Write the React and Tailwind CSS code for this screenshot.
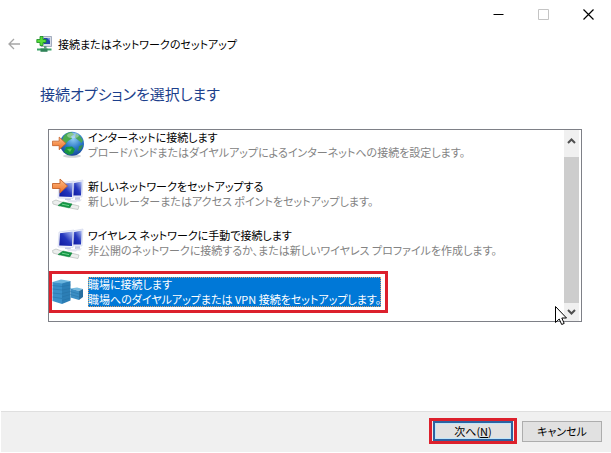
import React, { useState } from 'react';

const Arrow = () => (
    <path d="M0.5 8.5 H8 V4 L15.5 11 L8 18 V13.5 H0.5 Z" fill="url(#arrowFill)" stroke="#c4622a" strokeWidth="0.9" strokeLinejoin="round" />
);

const Monitors = () => (
    <>
        <path d="M20 4 L31 2 L30 19 L19 19 Z" fill="#eef0fa" stroke="#c3cae6" strokeWidth="0.5" />
        <path d="M21 5.2 L29.8 3.6 L29 17.6 L20.4 17.6 Z" fill="url(#screenFill)" />
        <path d="M7 5 L22 3 L21 20.5 L6 20 Z" fill="#f4f5fc" stroke="#c3cae6" strokeWidth="0.5" />
        <path d="M8 6.2 L20.8 4.4 L20 19 L7.2 18.6 Z" fill="url(#screenFill)" />
        <path d="M13 20.4 L19 20.6 L18.5 22.5 L13 22 Z M23 19.2 H28 V22 H23 Z" fill="#c3c9e4" />
        <path d="M15 22 L26 22.5 L24 24.5 L16 24 Z M24 21.5 H30 L28 23.5 H24 Z" fill="#e2e4f0" />
        <path d="M0.5 23.5 L4 22 L11 24.5 L8 28 L1 26 Z M19 26 L27 28 L26 31.5 L18 30 Z" fill="#eceeed" stroke="#b4bcb8" strokeWidth="0.7" />
        <path d="M6 27.5 L11 24 L20 26 L17.5 30 Z" fill="#159645" stroke="#0b8038" strokeWidth="0.5" />
        <path d="M10 26.2 L17 27.6" stroke="#6bd58d" />
    </>
);

const GlobeIcon = () => (
    <svg className="h-8 w-8 shrink-0" viewBox="0 0 32 32" aria-hidden="true">
        <ellipse cx="20" cy="27" rx="9" ry="1.8" fill="#cfd3d6" />
        <circle cx="20" cy="14.8" r="12" fill="url(#globeFill)" />
        <path d="M11 8.5 C13 4.5 17 3 20 3.4 L22 5.5 L19 7.5 L20 9.5 L16 12 L13 16 L9 15 Z" fill="#4cab4f" />
        <path d="M24 4.5 L28 7 L31 11.5 L29.5 14 L26 11 L23 8.5 Z" fill="#4ba65b" />
        <path d="M14 18 L20 17.5 L23 20 L21 24.5 L17 26 L12 23 Z" fill="#199541" />
        <path d="M15 20 L20 19.5 L18 23 Z" fill="#54c95a" />
        <path d="M27 17 L31 16 L29 20.5 L26 22 Z" fill="#358f55" />
        <ellipse cx="21" cy="6.5" rx="6" ry="2.8" fill="#fff" opacity="0.35" />
        <g transform="translate(0 4.5) scale(0.9)">
            <Arrow />
        </g>
    </svg>
);

const RouterIcon = () => (
    <svg className="h-8 w-8 shrink-0" viewBox="0 0 32 32" aria-hidden="true">
        <Monitors />
        <g transform="translate(0 -3)">
            <Arrow />
        </g>
    </svg>
);

const WirelessIcon = () => (
    <svg className="h-8 w-8 shrink-0" viewBox="0 0 32 32" aria-hidden="true">
        <Monitors />
    </svg>
);

const WorkplaceIcon = () => (
    <svg className="h-8 w-8 shrink-0" viewBox="0 0 32 32" aria-hidden="true">
        <path d="M0.5 6 L10 6.5 V28 L0.5 25 Z" fill="#398fc8" />
        <path d="M10 6.5 L18.5 5 V24.5 L10 28 Z" fill="#2c7eb5" />
        <path d="M0.5 6 L9 3.5 L18.5 5 L10 7.5 Z" fill="#69b3dd" />
        <path d="M10 10.5 L18.5 9 M10 14 L18.5 12.5 M10 17.5 L18.5 15.5 M10 21 L18.5 18.5 M10 24.5 L18.5 22 M0.5 9.5 L10 10.5 M0.5 13 L10 14 M0.5 17 L10 18 M0.5 21 L10 22.5" stroke="#246fa3" strokeWidth="0.5" />
        <path d="M18.5 12.5 L25 11.5 L31 13 L27 15 Z" fill="#77bbdf" />
        <path d="M18.5 12.5 L27 15 V24 L18.5 21.5 Z" fill="#3c8ec4" />
        <path d="M27 15 L31 13 V21 L27 24 Z" fill="#286f9f" />
        <path d="M18.5 15.5 L27 18 L31 16 M18.5 18.5 L27 21 L31 18.5" stroke="#2571a5" strokeWidth="0.5" fill="none" />
    </svg>
);

const SetupIcon = () => (
    <svg className="h-4 w-4" viewBox="0 0 16 16" aria-hidden="true">
        <path d="M6 0.5 H15.5 V10.5 H5 V2 Z" fill="#d6dbe6" stroke="#8490a7" strokeWidth="0.7" />
        <path d="M7.5 2 H14 V8 H7.5 Z" fill="#2447a8" />
        <path d="M11 2 H14 V5 Z" fill="#7794dc" />
        <path d="M8 10 H10.5 V12.5 H8 Z" fill="#5e9f7d" />
        <path d="M1 12.5 H15.5 V14.5 H1 Z" fill="#3da469" />
        <path d="M4.5 12.5 H11.5 V15.8 H4.5 Z" fill="#308359" />
        <path d="M4 0.5 H7 V3.5 H10 V6.5 H7 V9.5 H4 V6.5 H0.8 V3.5 H4 Z" fill="#58dc38" stroke="#178d20" strokeWidth="0.8" />
    </svg>
);

const options = [
    {
        icon: GlobeIcon,
        title: 'インターネットに接続します',
        description: 'ブロードバンドまたはダイヤルアップによるインターネットへの接続を設定します。'
    },
    {
        icon: RouterIcon,
        title: '新しいネットワークをセットアップする',
        description: '新しいルーターまたはアクセス ポイントをセットアップします。'
    },
    {
        icon: WirelessIcon,
        title: 'ワイヤレス ネットワークに手動で接続します',
        description: '非公開のネットワークに接続するか、または新しいワイヤレス プロファイルを作成します。'
    },
    {
        icon: WorkplaceIcon,
        title: '職場に接続します',
        description: '職場へのダイヤルアップまたは VPN 接続をセットアップします。'
    }
];

const App = () => {
    const [selected, setSelected] = useState(3);

    return (
        <div className="flex min-h-screen flex-col bg-white font-['Noto_Sans_CJK_JP',sans-serif] text-[11px] leading-[15px] text-black [font-feature-settings:'palt']">
            {/* Shared gradients */}
            <svg className="absolute h-0 w-0" aria-hidden="true">
                <defs>
                    <linearGradient id="arrowFill" x1="0" y1="0" x2="0" y2="1">
                        <stop offset="0" stopColor="#ffc08a" />
                        <stop offset="1" stopColor="#ed6b1f" />
                    </linearGradient>
                    <linearGradient id="screenFill" x1="0" y1="1" x2="1" y2="0">
                        <stop offset="0" stopColor="#0d189d" />
                        <stop offset="0.5" stopColor="#2436bd" />
                        <stop offset="1" stopColor="#b3c2f2" />
                    </linearGradient>
                    <radialGradient id="globeFill" cx="0.55" cy="0.3" r="0.75">
                        <stop offset="0" stopColor="#8fcdf3" />
                        <stop offset="0.5" stopColor="#2d7ac9" />
                        <stop offset="1" stopColor="#123f91" />
                    </radialGradient>
                </defs>
            </svg>

            {/* Window controls */}
            <div className="flex h-7 justify-end">
                <button aria-label="最小化" className="flex w-[45px] items-center justify-center">
                    <svg className="h-[11px] w-[11px]" viewBox="0 0 11 11"><path d="M0.5 5.5 H10.5" stroke="#000" /></svg>
                </button>
                <button aria-label="最大化" disabled className="flex w-[45px] items-center justify-center">
                    <svg className="h-[11px] w-[11px]" viewBox="0 0 11 11"><path d="M0.5 0.5 H10.5 V10.5 H0.5 Z" fill="none" stroke="#c4c4c4" /></svg>
                </button>
                <button aria-label="閉じる" className="flex w-[45px] items-center justify-center">
                    <svg className="h-[11px] w-[11px]" viewBox="0 0 11 11"><path d="M0.5 0.5 L10.5 10.5 M10.5 0.5 L0.5 10.5" stroke="#000" strokeWidth="1.2" /></svg>
                </button>
            </div>

            {/* Title */}
            <header className="flex h-8 items-center pl-2">
                <button aria-label="戻る" disabled className="mr-4 flex">
                    <svg className="h-3 w-3" viewBox="0 0 12 12"><path d="M6 1 L1 6 L6 11 M1 6 H12" fill="none" stroke="#a6a6a6" strokeWidth="1.3" /></svg>
                </button>
                <SetupIcon />
                <span className="ml-1.5">接続またはネットワークのセットアップ</span>
            </header>

            <main className="flex grow flex-col pr-[29px] pl-12">
                <h1 className="-ml-2 pt-[22px] text-[15px] leading-6 text-[#1c3f8c]">接続オプションを選択します</h1>

                <div className="relative mt-[23px] flex h-[193px] border border-[#7e8087] pr-0.5">
                    <ul role="listbox" aria-label="接続オプション" className="-mt-1.5 flex min-w-0 grow flex-col items-start gap-[7px] [clip-path:inset(6px_0_0_0)]">
                        {options.map((option, idx) => (
                            <li key={idx} role="presentation">
                                <button
                                    role="option"
                                    aria-selected={selected === idx}
                                    onClick={() => setSelected(idx)}
                                    className={`flex h-[42px] items-center gap-1 border-3 pr-1 text-left whitespace-nowrap ${selected === idx ? 'border-[#dc202c]' : 'border-transparent'}`}
                                >
                                    <option.icon />
                                    <span className={`flex flex-col ${selected === idx ? 'bg-[#0078d7] text-white outline-1 -outline-offset-1 outline-[#d8a070] outline-dotted' : ''}`}>
                                        <span>{option.title}</span>
                                        <span className={selected === idx ? '' : 'text-[#838383]'}>{option.description}</span>
                                    </span>
                                </button>
                            </li>
                        ))}
                    </ul>

                    {/* Scroll bar */}
                    <div className="flex w-[15px] shrink-0 flex-col bg-[#f0f0f0]">
                        <button aria-label="上へ" className="flex h-[27px] justify-center pt-2">
                            <svg className="h-[6px] w-[9px]" viewBox="0 0 9 6"><path d="M1 5 L4.5 1.5 L8 5" fill="none" stroke="#505050" strokeWidth="2" /></svg>
                        </button>
                        <div className="grow bg-[#cdcdcd]" />
                        <button aria-label="下へ" className="flex h-[18px] items-center justify-center">
                            <svg className="h-[6px] w-[9px]" viewBox="0 0 9 6"><path d="M1 1 L4.5 4.5 L8 1" fill="none" stroke="#505050" strokeWidth="2" /></svg>
                        </button>
                    </div>

                    {/* Mouse pointer */}
                    <svg className="absolute right-[14px] -bottom-1 h-[19px] w-3" viewBox="0 0 12 19" aria-hidden="true">
                        <path d="M0.5 0.5 V16.5 L4.2 13 L6.7 18.5 L9.2 17.4 L6.8 12 H11.5 Z" fill="#fff" stroke="#000" />
                    </svg>
                </div>
            </main>

            <footer className="mb-px ml-px flex h-[41px] items-center justify-end gap-[5px] border-t border-[#dfdfdf] bg-[#f0f0f0] pr-[9px] pb-0.5">
                <div className="flex border-3 border-[#dc202c] px-px">
                    <button className="h-5 w-20 border-2 border-[#2d62a0] bg-[#e1e1e1] leading-4 ring-1 ring-[#bfe6fa] ring-inset">
                        次へ(<span className="underline">N</span>)
                    </button>
                </div>
                <button className="h-[21px] w-20 border border-[#adadad] bg-[#e1e1e1] leading-4">キャンセル</button>
            </footer>
        </div>
    );
};

export default App;
